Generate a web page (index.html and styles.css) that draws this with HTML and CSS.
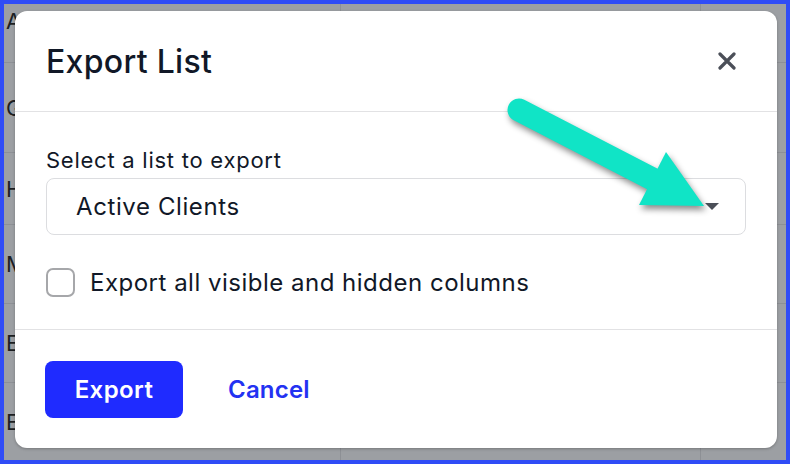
FILE: index.html
```html
<!DOCTYPE html>
<html lang="en">
<head>
<meta charset="UTF-8">
<meta name="viewport" content="width=device-width, initial-scale=1.0">
<title>Export List</title>
<link rel="stylesheet" href="styles.css">
</head>
<body>
<div class="frame">
    <!-- list table behind the dialog -->
    <div class="table">
        <div class="row r1"><span class="cell">A</span><span class="cell"></span><span class="cell"></span></div>
        <div class="row r2"><span class="cell">G</span><span class="cell"></span><span class="cell"></span></div>
        <div class="row r3"><span class="cell">H</span><span class="cell"></span><span class="cell"></span></div>
        <div class="row r4"><span class="cell">M</span><span class="cell"></span><span class="cell"></span></div>
        <div class="row r5"><span class="cell">E</span><span class="cell"></span><span class="cell"></span></div>
        <div class="row r6"><span class="cell">E</span><span class="cell"></span><span class="cell"></span></div>
    </div>

    <div class="modal">
        <div class="modal-header">
            <h2 class="modal-title">Export List</h2>
            <button class="close-btn" aria-label="Close">
                <svg width="18" height="18" viewBox="0 0 18 18">
                    <path d="M2 2 L16 16 M16 2 L2 16" stroke="#4b4f58" stroke-width="3.2" stroke-linecap="round"/>
                </svg>
            </button>
        </div>

        <div class="modal-body">
            <label class="field-label">Select a list to export</label>
            <div class="select">
                <span>Active Clients</span>
                <span class="caret"></span>
            </div>
            <label class="check-row">
                <span class="checkbox"></span>
                <span>Export all visible and hidden columns</span>
            </label>
        </div>

        <div class="modal-footer">
            <button class="btn-primary">Export</button>
            <button class="btn-link">Cancel</button>
        </div>
    </div>

    <!-- annotation arrow -->
    <svg class="arrow" width="790" height="464" viewBox="0 0 790 464">
        <line x1="519" y1="110" x2="664" y2="185" stroke="#10e4c6" stroke-width="23" stroke-linecap="round"/>
        <polygon points="666,152 639,205 704,206" fill="#10e4c6"/>
    </svg>
</div>
</body>
</html>
```

FILE: styles.css
```css
* {
    box-sizing: border-box;
}

body {
    margin: 0;
    font-family: Inter, "Noto Sans", sans-serif;
    color: #111827;
}

.frame {
    position: relative;
    width: 790px;
    height: 464px;
    border: 4px solid #2f4cf6;
    background-color: #9c9fa3;
    overflow: hidden;
}

.table {
    display: flex;
    flex-direction: column;
}

.row {
    display: grid;
    grid-template-columns: 337px 360px 1fr;
    border-bottom: 1px solid #8d9095;
}

.r1 { height: 59px; }
.r2 { height: 90px; }
.r3 { height: 72px; }
.r4 { height: 79px; }
.r5 { height: 79px; }
.r6 { height: 77px; border-bottom: none; }

.cell {
    border-right: 1px solid #8d9095;
    font-size: 22px;
    color: #1d1f23;
    display: flex;
    align-items: center;
    padding-left: 2px;
}

.cell:last-child {
    border-right: none;
}

.r1 .cell {
    align-items: flex-start;
    padding-top: 4px;
}

.modal {
    position: absolute;
    left: 11px;
    top: 7px;
    width: 762px;
    height: 437px;
    background-color: #fff;
    border-radius: 12px;
    box-shadow: 0 1px 3px rgba(0, 0, 0, 0.25);
    display: flex;
    flex-direction: column;
}

.modal-header {
    height: 101px;
    padding: 0 41px 0 31px;
    display: flex;
    align-items: center;
    justify-content: space-between;
    border-bottom: 1px solid #e2e2e4;
}

.modal-title {
    margin: 0;
    font-size: 32px;
    font-weight: 500;
    letter-spacing: 0.3px;
}

.close-btn {
    border: none;
    background: none;
    padding: 0;
    display: flex;
    cursor: pointer;
}

.modal-body {
    padding: 36px 31px 0 31px;
    height: 218px;
    border-bottom: 1px solid #e2e2e4;
}

.field-label {
    display: block;
    font-size: 22px;
    line-height: 24px;
    letter-spacing: 0.75px;
    margin-bottom: 6px;
}

.select {
    height: 57px;
    border: 1px solid #dcdde0;
    border-radius: 8px;
    padding: 0 26px 0 29px;
    display: flex;
    align-items: center;
    justify-content: space-between;
    font-size: 24px;
    letter-spacing: 0.6px;
}

.caret {
    width: 0;
    height: 0;
    border-left: 7px solid transparent;
    border-right: 7px solid transparent;
    border-top: 7px solid #4b4f58;
}

.check-row {
    display: flex;
    align-items: center;
    gap: 15px;
    margin-top: 33px;
    font-size: 24px;
    line-height: 29px;
    letter-spacing: 0.5px;
}

.checkbox {
    width: 29px;
    height: 29px;
    border: 2px solid #a6a7aa;
    border-radius: 7px;
}

.modal-footer {
    flex: 1;
    padding: 0 31px 0 30px;
    display: flex;
    align-items: center;
    gap: 45px;
}

.btn-primary {
    width: 138px;
    height: 57px;
    border: none;
    border-radius: 8px;
    background-color: #1f2bff;
    color: #fff;
    font-family: inherit;
    font-size: 24px;
    font-weight: 600;
    letter-spacing: 0.4px;
    cursor: pointer;
}

.btn-link {
    border: none;
    background: none;
    padding: 0;
    color: #2332f2;
    font-family: inherit;
    font-size: 24px;
    font-weight: 600;
    letter-spacing: 0.2px;
    cursor: pointer;
}

.arrow {
    position: absolute;
    left: -4px;
    top: -4px;
    filter: drop-shadow(2px 4px 3px rgba(0, 0, 0, 0.45));
    pointer-events: none;
}
```
